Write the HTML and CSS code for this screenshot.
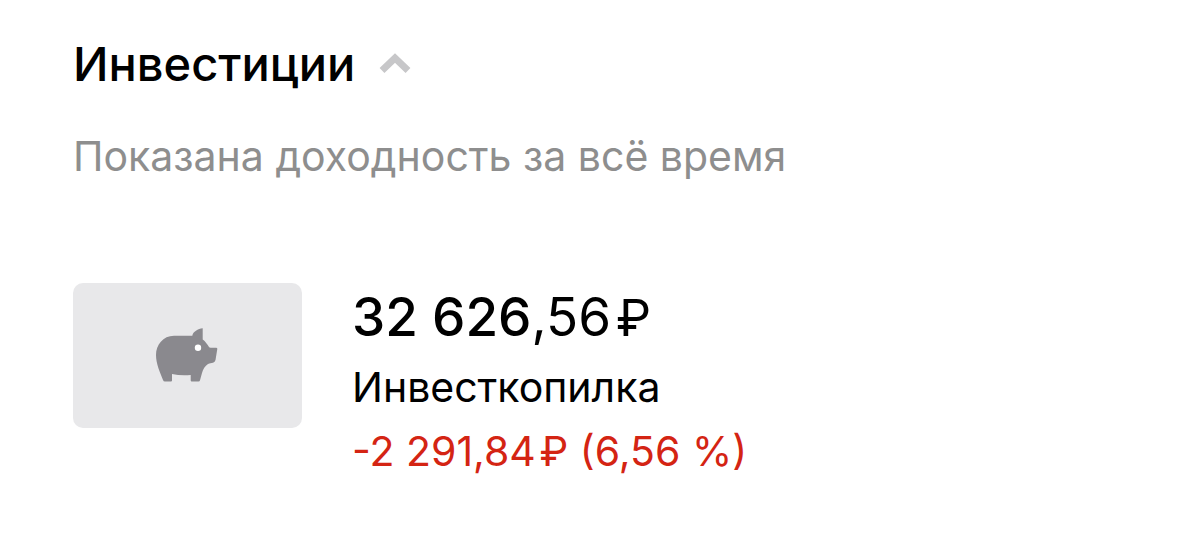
FILE: index.html
```html
<!DOCTYPE html>
<html lang="ru">
<head>
    <meta charset="utf-8">
    <meta name="viewport" content="width=device-width, initial-scale=1">
    <title>Инвестиции</title>
    <link rel="stylesheet" href="styles.css">
</head>
<body>
<section class="investments">
    <div class="header">
        <h2>Инвестиции</h2>
        <button type="button" class="toggle" aria-label="Свернуть" aria-expanded="true">
            <svg width="32" height="22" viewBox="0 0 32 22">
                <path d="M3 17.500L16 5L29 17.500" fill="none" stroke="currentColor" stroke-width="7"/>
            </svg>
        </button>
    </div>
    <p class="note">Показана доходность за всё время</p>
    <div class="account">
        <div class="card">
            <svg width="64" height="56" viewBox="0 0 64 56">
                <path fill="#8a898e" d="M46.700 0.300C42 1 37 3.500 36.300 7.700H18C7 7.700 0 17 0 27C0 36 4 44 7 52Q7.500 53.500 9 53.500H15Q16 53.500 16 52.500V46Q25 48 34.700 47V52.500Q34.700 53.500 35.700 53.500H42.500Q43.700 53.500 44 52.300L46 45C47 41 49 38 52 36C54 34.700 55 35.500 57 34.700Q59 34 59.500 32L61.300 21Q61.500 19.700 60 19.700H54.500Q53.500 19.700 53 19C51 16 49.500 13.500 46.700 11.500Z"/>
                <circle cx="42" cy="19.700" r="3.200" fill="#fff"/>
            </svg>
        </div>
        <div class="info">
            <div class="amount"><b>32 626</b>,56&#8202;<span class="currency">₽</span></div>
            <div class="name">Инвесткопилка</div>
            <div class="profit">-2 291,84&#8202;₽ (6,56 %)</div>
        </div>
    </div>
</section>
</body>
</html>
```
FILE: styles.css
```css
body {
    margin: 0;
    background: #fff;
    color: #000;
    font-family: Inter, "Liberation Sans", sans-serif;
}

.investments {
    padding: 36px 74px 36px 73px;
}

.header {
    display: flex;
    align-items: center;
    gap: 24px;
}

h2 {
    margin: 0;
    font-size: 47px;
    line-height: 56px;
    font-weight: 500;
}

.toggle {
    display: flex;
    padding: 0;
    border: none;
    background: none;
    color: #c7c7c9;
    cursor: pointer;
}

.note {
    margin: 40px 0 0;
    font-size: 41px;
    line-height: 48px;
    color: #8e8e8e;
}

.account {
    display: flex;
    gap: 50px;
    margin-top: 103px;
}

.card {
    display: flex;
    align-items: center;
    justify-content: center;
    flex: none;
    width: 229px;
    height: 145px;
    border-radius: 10px;
    background: #e8e8ea;
}

.amount {
    font-size: 53px;
    line-height: 68px;
}

.amount b {
    font-weight: 500;
}

.currency {
    font-size: 50px;
}

.name,
.profit {
    font-size: 41px;
    line-height: 64px;
}

.name {
    margin-top: 3px;
}

.profit {
    color: #d42413;
}
```
